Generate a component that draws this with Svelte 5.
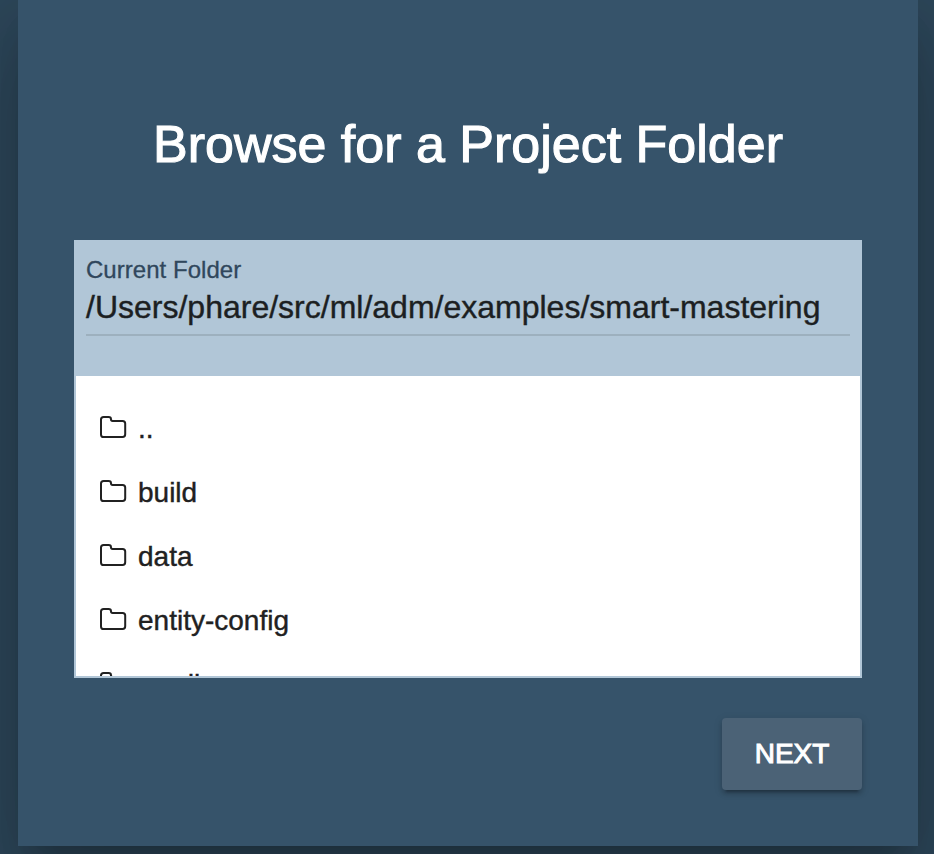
<script>
  const folders = ['..', 'build', 'data', 'entity-config', 'gradle'];
  const currentFolder = '/Users/phare/src/ml/adm/examples/smart-mastering';
</script>

<main>
  <section class="dialog">
    <h1><span>Browse for a Project Folder</span></h1>
    <div class="browser">
      <header>
        <div class="label"><span>Current Folder</span></div>
        <div class="path"><span>{currentFolder}</span></div>
      </header>
      <ul>
        {#each folders as folder}
          <li>
            <svg width="28" height="24" viewBox="0 0 28 24" fill="none" stroke="#212121" stroke-width="2" stroke-linejoin="round">
              <path d="M4.6 2H9.6Q12 2 12 4.2V4.6Q12 6 13.6 6H23.6Q26.2 6 26.2 8.6V19.2Q26.2 22 23.6 22H4.6Q2 22 2 19.4V4.6Q2 2 4.6 2Z" />
            </svg>
            <span>{folder}</span>
          </li>
        {/each}
      </ul>
    </div>
    <footer><button><span>NEXT</span></button></footer>
  </section>
</main>

<style>
  main {
    box-sizing: border-box;
    height: 854px;
    padding: 0 16px 8px 18px;
    overflow: hidden;
    background: #2d475a;
    font-family: "Liberation Sans", Arial, sans-serif;
  }
  .dialog {
    box-sizing: border-box;
    height: 846px;
    padding: 108px 56px 56px;
    background: #36536a;
    box-shadow:
      0 22px 30px -14px rgba(0, 0, 0, 0.2),
      0 48px 76px 6px rgba(0, 0, 0, 0.14),
      0 18px 92px 16px rgba(0, 0, 0, 0.12);
  }
  h1 {
    margin: 0 0 60px;
    height: 72px;
    line-height: 72px;
    font-size: 52px;
    font-weight: 400;
    text-align: center;
    white-space: nowrap;
    color: #fff;
    -webkit-text-stroke: 1.1px #fff;
  }
  .browser {
    box-sizing: border-box;
    height: 438px;
    border: 2px solid #b1c6d7;
    background: #fff;
    overflow: hidden;
  }
  header {
    box-sizing: border-box;
    height: 134px;
    padding: 12px 10px 0;
    background: #b1c6d7;
  }
  .label {
    height: 32px;
    line-height: 32px;
    font-size: 24px;
    letter-spacing: 0.04px;
    color: #30475c;
    -webkit-text-stroke: 0.3px #30475c;
  }
  .path {
    height: 48px;
    border-bottom: 2px solid #9db0be;
    line-height: 42px;
    font-size: 32px;
    white-space: nowrap;
    color: #1c1f22;
    -webkit-text-stroke: 0.4px #1c1f22;
  }
  ul {
    margin: 0;
    padding: 20px 0 0 23px;
    list-style: none;
  }
  li {
    display: flex;
    align-items: center;
    height: 64px;
    font-size: 28px;
    color: #212121;
    -webkit-text-stroke: 0.4px #212121;
  }
  li span {
    padding-top: 2px;
  }
  li svg {
    flex: none;
    margin: 0 11px 2px 0;
  }
  footer {
    display: flex;
    justify-content: flex-end;
    margin-top: 40px;
  }
  button {
    width: 140px;
    height: 72px;
    padding: 0;
    border: 0;
    border-radius: 4px;
    background: #4b6276;
    color: #fff;
    font-family: inherit;
    font-size: 28px;
    -webkit-text-stroke: 1px #fff;
    box-shadow:
      0 6px 2px -4px rgba(0, 0, 0, 0.2),
      0 4px 4px 0 rgba(0, 0, 0, 0.14),
      0 2px 10px 0 rgba(0, 0, 0, 0.12);
  }
</style>
